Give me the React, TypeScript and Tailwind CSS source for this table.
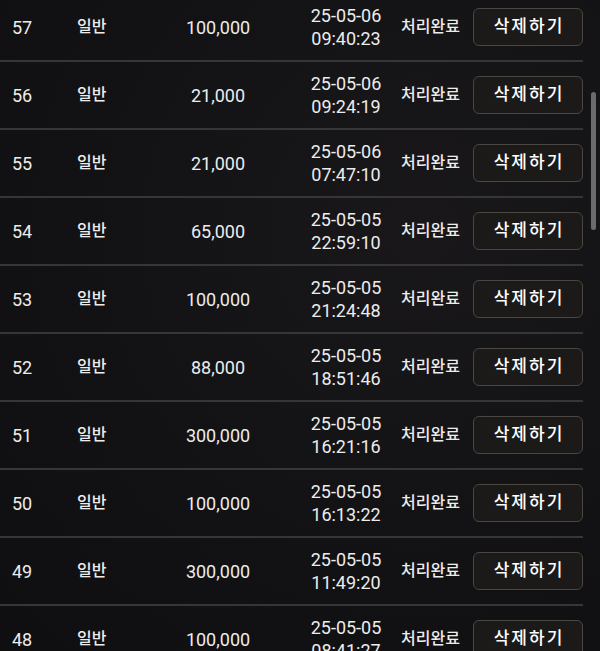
import React from 'react';

type Row = {
  id: number;
  kind: string;
  amount: string;
  date: string;
  time: string;
  status: string;
};

const rows: Row[] = [
  { id: 57, kind: '일반', amount: '100,000', date: '25-05-06', time: '09:40:23', status: '처리완료' },
  { id: 56, kind: '일반', amount: '21,000', date: '25-05-06', time: '09:24:19', status: '처리완료' },
  { id: 55, kind: '일반', amount: '21,000', date: '25-05-06', time: '07:47:10', status: '처리완료' },
  { id: 54, kind: '일반', amount: '65,000', date: '25-05-05', time: '22:59:10', status: '처리완료' },
  { id: 53, kind: '일반', amount: '100,000', date: '25-05-05', time: '21:24:48', status: '처리완료' },
  { id: 52, kind: '일반', amount: '88,000', date: '25-05-05', time: '18:51:46', status: '처리완료' },
  { id: 51, kind: '일반', amount: '300,000', date: '25-05-05', time: '16:21:16', status: '처리완료' },
  { id: 50, kind: '일반', amount: '100,000', date: '25-05-05', time: '16:13:22', status: '처리완료' },
  { id: 49, kind: '일반', amount: '300,000', date: '25-05-05', time: '11:49:20', status: '처리완료' },
  { id: 48, kind: '일반', amount: '100,000', date: '25-05-05', time: '08:41:27', status: '처리완료' },
];

const App: React.FC = () => {
  return (
    <div className="relative h-[651px] w-[600px] overflow-hidden bg-[radial-gradient(ellipse_at_70%_35%,#19171a_0%,#121214_55%,#0f0f11_100%)] font-['Roboto','Noto_Sans_CJK_KR',sans-serif] text-[#ececec]">
      {/* 입금 내역 리스트 */}
      <div className="-mt-[6px] w-[583px]">
        {rows.map((row) => (
          <div key={row.id} className="flex h-[68px] items-center border-b-2 border-[#363638]">
            <div className="w-[77px] pl-3 text-[18px]">{row.id}</div>
            <div className="w-[53px] text-[16px] font-medium">{row.kind}</div>
            <div className="w-[176px] text-center text-[18px]">{row.amount}</div>
            <div className="w-[80px] text-center text-[18px] leading-[23px]">
              <div>{row.date}</div>
              <div>{row.time}</div>
            </div>
            <div className="w-[87px] pl-[15px] text-[16px] font-medium">{row.status}</div>
            <button className="flex h-[38px] w-[110px] items-center justify-center rounded-[6px] border border-[#4a4642] bg-[#1c1a19] pl-[2px] text-[17px] font-medium tracking-[2px] text-white">
              삭제하기
            </button>
          </div>
        ))}
      </div>

      {/* 스크롤바 */}
      <div className="absolute left-[591px] top-[92px] h-[138px] w-[5px] rounded-full bg-[#6b6b6b]" />
    </div>
  );
};

export default App;
